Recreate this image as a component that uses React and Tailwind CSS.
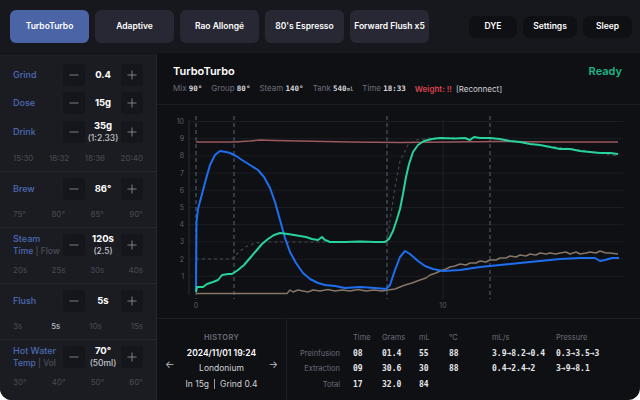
import React from 'react'
import { Minus, Plus } from 'lucide-react'

// profile buttons on the top bar
const profiles = ['TurboTurbo', 'Adaptive', 'Rao Allongé', "80's Espresso", 'Forward Flush x5']

// chart helpers: seconds -> x, value -> y (page coordinates)
const X = (t) => 196 + 24.7 * t
const Y = (v) => 294.5 - 17.2 * v
const pts = (arr) => arr.map(([x, y]) => `${x},${y}`).join(' ')

const flow = [
  [196, 292], [196.5, 223], [198, 210], [202, 195], [206, 180], [210, 166], [215, 156], [220, 152], [226, 153], [230, 154],
  [236, 157], [242, 161], [250, 166], [258, 171], [264, 178], [270, 189], [275, 203], [280, 221], [285, 239], [290, 253],
  [296, 264], [303, 274], [310, 280], [318, 284], [325, 286], [335, 287], [345, 289], [360, 288], [375, 289], [386, 290],
  [390, 286], [395, 271], [400, 258], [405, 252], [410, 255], [418, 262], [425, 267], [433, 270], [443, 272], [460, 271],
  [480, 268], [500, 266], [520, 264], [540, 262], [560, 260], [580, 259], [595, 259], [600, 262], [605, 261], [612, 259], [619, 259],
]

const pressure = [
  [196, 293], [197, 288], [203, 288], [207, 285], [213, 283], [218, 281], [222, 276], [228, 275], [232, 275], [238, 271],
  [244, 266], [250, 259], [256, 252], [262, 245], [268, 240], [274, 236], [280, 234], [288, 235], [294, 236], [300, 237],
  [306, 238], [312, 240], [318, 241], [322, 238], [325, 241], [330, 243], [345, 243], [360, 242.5], [375, 243], [385, 243],
  [389, 240], [393, 232], [397, 220], [400, 210], [403, 195], [406, 178], [409, 165], [413, 153], [418, 146], [424, 142],
  [432, 140], [440, 139], [455, 139.5], [465, 139], [470, 141], [474, 138], [480, 139], [490, 139], [500, 140], [510, 142],
  [520, 143], [530, 145], [540, 146], [550, 148], [560, 150], [570, 150], [580, 152], [590, 153], [600, 154], [610, 154], [618, 155],
]

const target = [
  [196, 260], [232, 260], [238, 254], [245, 248], [255, 244], [265, 243], [387, 243], [390, 222], [395, 188],
  [400, 162], [408, 146], [416, 141], [430, 139], [490, 139], [540, 146], [580, 151], [618, 157],
]

const temp = [
  [196, 143], [234, 143], [250, 142], [260, 141], [275, 141.5], [300, 142], [350, 143], [400, 143.5], [500, 142.5], [550, 143], [618, 143],
]

const weight = [
  [196, 294.5], [287, 294.5], [290, 291], [293, 293], [298, 291], [303, 292], [308, 293], [313, 291], [320, 292], [328, 290.5],
  [335, 292], [342, 291], [350, 292], [358, 290.5], [366, 292], [374, 291], [382, 292], [388, 291], [395, 290], [400, 288],
  [405, 286], [412, 284], [420, 281], [426, 279], [430, 276], [436, 274], [440, 272], [446, 270], [450, 268], [455, 267],
  [460, 265], [466, 266], [470, 264], [476, 264], [480, 262], [486, 263], [490, 261], [496, 261], [500, 259], [506, 259],
  [510, 257], [516, 258], [520, 256], [526, 257], [530, 255], [536, 256], [540, 254], [546, 255], [550, 254], [556, 255],
  [560, 254], [566, 253], [570, 255], [576, 253], [580, 255], [586, 254], [590, 253], [596, 254], [600, 252], [606, 254],
  [610, 254], [618, 255],
]

const Btn = ({ children }) => (
  <div className="w-[22px] h-[22px] rounded-[3px] bg-[#15161b] flex items-center justify-center text-[#8c8e98]">
    {children}
  </div>
)

const Stepper = ({ value, sub }) => (
  <div className="flex items-center">
    <Btn><Minus size={14} strokeWidth={1.5} /></Btn>
    <div className="w-[36px] flex flex-col items-center">
      <span className="text-[9.5px] font-bold text-white leading-[12px]">{value}</span>
      {sub && <span className="text-[8.5px] font-medium text-[#c4c6cc] leading-[12px]">{sub}</span>}
    </div>
    <Btn><Plus size={14} strokeWidth={1.5} /></Btn>
  </div>
)

const Label = ({ title, a, b }) => (
  <div className="flex flex-col">
    <span className="text-[9px] font-medium text-[#4c6ab5] leading-[12px]">{title}</span>
    {a && (
      <span className="text-[8.5px] font-medium leading-[12px]">
        <span className="text-[#4c6ab5]">{a}</span>
        <span className="text-[#4a4d58]"> | {b}</span>
      </span>
    )}
  </div>
)

const Marks = ({ items, active }) => (
  <div className="flex justify-between px-[13px] text-[8px] leading-[12px] text-[#474a55]">
    {items.map((m) => (
      <span key={m} className={m === active ? 'text-[#c8cad0]' : ''}>{m}</span>
    ))}
  </div>
)

const Section = ({ label, value, marks, active }) => (
  <div className="pt-[2px] pb-[7px] border-b border-[#26272f]">
    <div className="h-[30px] flex items-center justify-between px-[13px]">
      {label}
      {value}
    </div>
    <div className="mt-[4px]">
      <Marks items={marks} active={active} />
    </div>
  </div>
)

const Chart = () => (
  <svg className="w-[483px] h-[212px] block" viewBox="157 106 483 212">
    {[1, 2, 3, 4, 5, 6, 7, 8, 9, 10].map((v) => (
      <g key={v}>
        <line x1={189} x2={623} y1={Y(v)} y2={Y(v)} stroke="#1b1d24" strokeWidth="1" />
        <text x={184} y={Y(v) + 2.5} textAnchor="end" fontSize="7" fill="#5b5e69" fontFamily="Inter, sans-serif">{v}</text>
      </g>
    ))}
    <line x1={189} x2={189} y1={121} y2={296} stroke="#2a2c34" strokeWidth="1" />
    <line x1={X(10)} x2={X(10)} y1={121} y2={300} stroke="#1f2128" strokeWidth="1" />
    {[196, 234, 387, 490].map((x) => (
      <line key={x} x1={x} x2={x} y1={117} y2={300} stroke="#4f5466" strokeWidth="1.2" strokeDasharray="4 3" />
    ))}
    <text x={196} y={309} textAnchor="middle" fontSize="7" fill="#5b5e69" fontFamily="Inter, sans-serif">0</text>
    <text x={443} y={309} textAnchor="middle" fontSize="7" fill="#5b5e69" fontFamily="Inter, sans-serif">10</text>

    <polyline points={pts(target)} fill="none" stroke="#454956" strokeWidth="1.1" strokeDasharray="3 3" />
    <polyline points={pts(temp)} fill="none" stroke="#9a5a60" strokeWidth="1.5" />
    <polyline points={pts(weight)} fill="none" stroke="#857668" strokeWidth="1.4" strokeLinejoin="round" />
    <polyline points={pts(flow)} fill="none" stroke="#1e6ff0" strokeWidth="2" strokeLinejoin="round" />
    <polyline points={pts(pressure)} fill="none" stroke="#27d39a" strokeWidth="2" strokeLinejoin="round" />
  </svg>
)

const Stat = ({ k, v }) => (
  <span className="mr-[9px]">
    <span className="text-[#6b6e79]">{k} </span>
    <span className="font-['DejaVu_Sans_Mono',monospace] font-bold text-[7.5px] text-[#d6d8de]">{v}</span>
  </span>
)

const rows = [
  ['Preinfusion', '08', '01.4', '55', '88', '3.9→8.2→0.4', '0.3→3.5→3'],
  ['Extraction', '09', '30.6', '30', '88', '0.4→2.4→2', '3→9→8.1'],
  ['Total', '17', '32.0', '84', '', '', ''],
]

export default function App() {
  return (
    <div className="w-[640px] h-[400px] bg-white font-[Inter,sans-serif]">
      <div className="w-full h-full flex flex-col rounded-b-[12px] overflow-hidden bg-[#0f1014]">
        {/* top bar */}
        <div className="h-[54px] shrink-0 flex items-center px-[10px] bg-[#17181d] border-b border-[#111216]">
          <div className="flex gap-[6px]">
            {profiles.map((p, i) => (
              <div
                key={p}
                className={
                  'w-[79px] h-[33px] rounded-[6px] flex items-center justify-center text-[8.5px] font-semibold text-white ' +
                  (i === 0 ? 'bg-[#4a64a5]' : 'bg-[#272833]')
                }
              >
                {p}
              </div>
            ))}
          </div>
          <div className="ml-auto flex gap-[6px] mr-[-2px]">
            <div className="w-[48px] h-[22px] rounded-[7px] bg-[#0f1013] flex items-center justify-center text-[8.5px] font-semibold text-white">DYE</div>
            <div className="w-[54px] h-[22px] rounded-[7px] bg-[#0f1013] flex items-center justify-center text-[8.5px] font-semibold text-white">Settings</div>
            <div className="w-[49px] h-[22px] rounded-[7px] bg-[#0f1013] flex items-center justify-center text-[8.5px] font-semibold text-white">Sleep</div>
          </div>
        </div>

        <div className="flex flex-1 min-h-0">
          {/* left controls */}
          <div className="w-[157px] shrink-0 bg-[#1b1c22] border-r border-[#26272e] flex flex-col">
            <div className="pt-[10px] pb-[7px] border-b border-[#26272f]">
              <div className="h-[22px] flex items-center justify-between px-[13px]">
                <Label title="Grind" />
                <Stepper value="0.4" />
              </div>
              <div className="h-[22px] mt-[6px] flex items-center justify-between px-[13px]">
                <Label title="Dose" />
                <Stepper value="15g" />
              </div>
              <div className="h-[30px] mt-[3px] flex items-center justify-between px-[13px]">
                <Label title="Drink" />
                <Stepper value="35g" sub="(1:2.33)" />
              </div>
              <div className="mt-[5px]">
                <Marks items={['15:30', '16:32', '18:36', '20:40']} />
              </div>
            </div>
            <Section label={<Label title="Brew" />} value={<Stepper value="86°" />} marks={['75°', '80°', '85°', '90°']} />
            <Section label={<Label title="Steam" a="Time" b="Flow" />} value={<Stepper value="120s" sub="(2.5)" />} marks={['20s', '25s', '30s', '40s']} />
            <Section label={<Label title="Flush" />} value={<Stepper value="5s" />} marks={['3s', '5s', '10s', '15s']} active="5s" />
            <div className="pt-[2px]">
              <div className="h-[30px] flex items-center justify-between px-[13px]">
                <Label title="Hot Water" a="Temp" b="Vol" />
                <Stepper value="70°" sub="(50ml)" />
              </div>
              <div className="mt-[4px]">
                <Marks items={['30°', '40°', '50°', '60°']} />
              </div>
            </div>
          </div>

          {/* main */}
          <div className="flex-1 flex flex-col min-w-0">
            <div className="h-[51px] shrink-0 border-b border-[#1c1d23] px-[16px] pr-[18px] pt-[10px]">
              <div className="flex items-center justify-between">
                <span className="text-[11px] font-semibold text-white leading-[14px]">TurboTurbo</span>
                <span className="text-[11px] font-semibold text-[#1fb585] leading-[14px]">Ready</span>
              </div>
              <div className="mt-[4px] text-[8px] leading-[12px] flex items-center">
                <Stat k="Mix" v="90°" />
                <Stat k="Group" v="80°" />
                <Stat k="Steam" v="140°" />
                <span className="mr-[9px]">
                  <span className="text-[#6b6e79]">Tank </span>
                  <span className="font-['DejaVu_Sans_Mono',monospace] font-bold text-[7.5px] text-[#d6d8de]">540</span>
                  <span className="font-['DejaVu_Sans_Mono',monospace] text-[5.5px] text-[#d6d8de]">ml</span>
                </span>
                <Stat k="Time" v="18:33" />
                <span className="mr-[4px] text-[#d9434f] font-semibold">Weight: !!</span>
                <span className="text-[#d0d2d8]">[Reconnect]</span>
              </div>
            </div>

            <div className="flex-1 min-h-0">
              <Chart />
            </div>

            <div className="h-[82px] shrink-0 border-t border-[#1c1d23] flex">
              <div className="w-[130px] shrink-0 border-r border-[#1c1d23] flex items-center px-[8px] pt-[3px]">
                <span className="text-[10px] text-[#c0c2c8] mt-[6px]">←</span>
                <div className="flex-1 flex flex-col items-center leading-[15.5px]">
                  <span className="text-[7.5px] font-semibold tracking-[0.3px] text-[#6b6e79]">HISTORY</span>
                  <span className="text-[8.5px] font-semibold text-white">2024/11/01 19:24</span>
                  <span className="text-[8.5px] text-[#d0d2d8]">Londonium</span>
                  <span className="text-[8.5px] text-[#d0d2d8] flex items-center gap-[5px]">
                    In 15g <span className="w-px h-[10px] bg-[#9a9ca5]" /> Grind 0.4
                  </span>
                </div>
                <span className="text-[10px] text-[#c0c2c8] mt-[6px]">→</span>
              </div>
              <div className="flex-1 pt-[11px]">
                <div className="grid grid-cols-[66px_29px_37px_30px_43px_64px_1fr] leading-[15.5px]">
                  {['', 'Time', 'Grams', 'mL', '°C', 'mL/s', 'Pressure'].map((h, i) => (
                    <span key={i} className="text-[7.5px] text-[#6b6e79]">{h}</span>
                  ))}
                  {rows.map((r) =>
                    r.map((c, i) =>
                      i === 0 ? (
                        <span key={r[0] + i} className="text-[7.5px] text-[#6b6e79] text-right pr-[13px]">{c}</span>
                      ) : (
                        <span key={r[0] + i} className="font-['DejaVu_Sans_Mono',monospace] font-bold text-[8px] text-[#e6e7ea]">{c}</span>
                      )
                    )
                  )}
                </div>
              </div>
            </div>
          </div>
        </div>
      </div>
    </div>
  )
}
